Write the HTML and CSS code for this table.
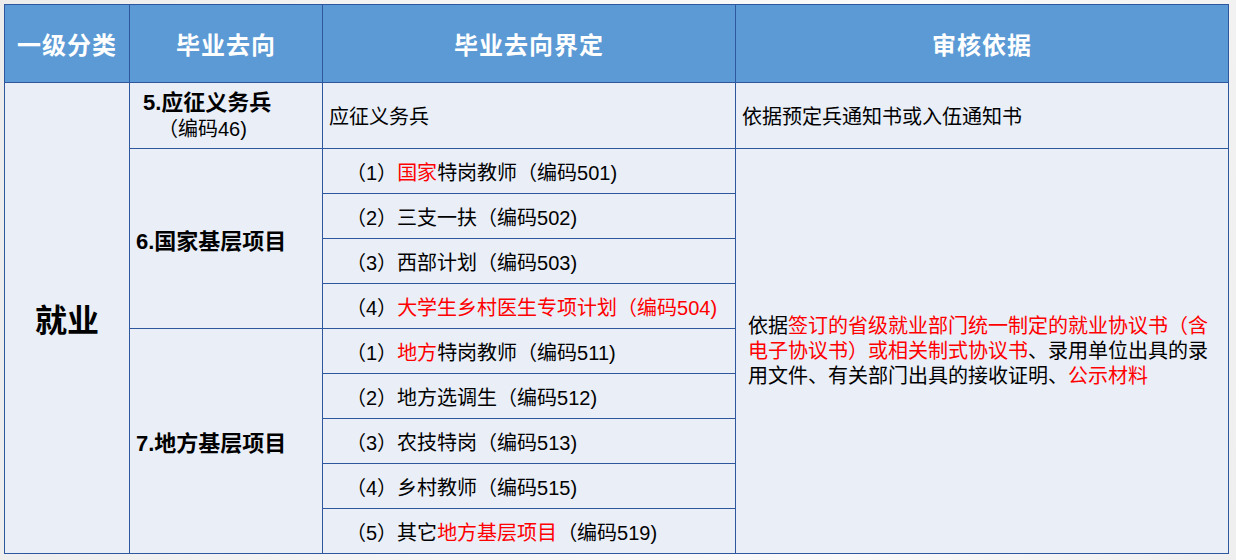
FILE: index.html
```html
<!DOCTYPE html>
<html lang="zh-CN">
<head>
<meta charset="utf-8">
<title>毕业去向</title>
<link rel="stylesheet" href="styles.css">
</head>
<body>
<table class="grid">
  <colgroup>
    <col class="c1"><col class="c2"><col class="c3"><col class="c4">
  </colgroup>
  <thead>
    <tr class="head">
      <th>一级分类</th>
      <th>毕业去向</th>
      <th>毕业去向界定</th>
      <th>审核依据</th>
    </tr>
  </thead>
  <tbody>
    <tr class="r1">
      <td rowspan="10" class="cat">就业</td>
      <td class="dir dir-first"><b class="dir-title">5.应征义务兵</b><span class="dir-code">（编码46)</span></td>
      <td class="def">应征义务兵</td>
      <td class="basis">依据预定兵通知书或入伍通知书</td>
    </tr>
    <tr class="sub">
      <td rowspan="4" class="dir"><b>6.国家基层项目</b></td>
      <td class="item">（1）<span class="red">国家</span>特岗教师（编码501)</td>
      <td rowspan="9" class="basis basis-big">依据<span class="red">签订的省级就业部门统一制定的就业协议书（含电子协议书）或相关制式协议书</span>、录用单位出具的录用文件、有关部门出具的接收证明、<span class="red">公示材料</span></td>
    </tr>
    <tr class="sub"><td class="item">（2）三支一扶（编码502)</td></tr>
    <tr class="sub"><td class="item">（3）西部计划（编码503)</td></tr>
    <tr class="sub"><td class="item">（4）<span class="red">大学生乡村医生专项计划（编码504)</span></td></tr>
    <tr class="sub">
      <td rowspan="5" class="dir"><b>7.地方基层项目</b></td>
      <td class="item">（1）<span class="red">地方</span>特岗教师（编码511)</td>
    </tr>
    <tr class="sub"><td class="item">（2）地方选调生（编码512)</td></tr>
    <tr class="sub"><td class="item">（3）农技特岗（编码513)</td></tr>
    <tr class="sub"><td class="item">（4）乡村教师（编码515)</td></tr>
    <tr class="sub"><td class="item">（5）其它<span class="red">地方基层项目</span>（编码519)</td></tr>
  </tbody>
</table>
</body>
</html>
```

FILE: styles.css
```css
html, body {
  margin: 0;
  padding: 0;
}
body {
  width: 1236px;
  height: 560px;
  box-sizing: border-box;
  padding: 4px 0 0 4px;
  background: linear-gradient(100deg, #ececec 0%, #f6f6f6 40%, #fafafa 70%, #efefef 100%);
  font-family: "Liberation Sans", "Noto Sans CJK SC", sans-serif;
  color: #000;
  overflow: hidden;
}
.grid {
  border-collapse: collapse;
  table-layout: fixed;
  width: 1224px;
  font-size: 20px;
}
.c1 { width: 125px; }
.c2 { width: 193px; }
.c3 { width: 413px; }
.c4 { width: 493px; }
.grid th,
.grid td {
  border: 1px solid #2f579e;
  padding: 0;
  background: #e9eef7;
  vertical-align: middle;
}
.head th {
  height: 77px;
  background: #5b9ad5;
  color: #fff;
  font-size: 24px;
  font-weight: 700;
  text-align: center;
  letter-spacing: 1px;
}
.r1 td { height: 65px; }
.sub td { height: 44px; }
.cat {
  text-align: center;
  font-size: 32px;
  font-weight: 700;
}
.dir {
  padding-left: 6px !important;
  font-size: 22px;
}
.dir b { font-weight: 700; }
.dir-first {
  padding-left: 13px !important;
  font-size: 20px;
  line-height: 27px;
}
.dir-title {
  display: block;
  font-size: 22px;
}
.dir-code {
  display: block;
  padding-left: 15px;
}
.def {
  padding-left: 6px !important;
}
.basis {
  padding-left: 6px !important;
}
.basis-big {
  padding: 0 12px !important;
  line-height: 25px;
}
.item {
  padding-left: 23px !important;
  white-space: nowrap;
}
.red { color: #ff0000; }
```
